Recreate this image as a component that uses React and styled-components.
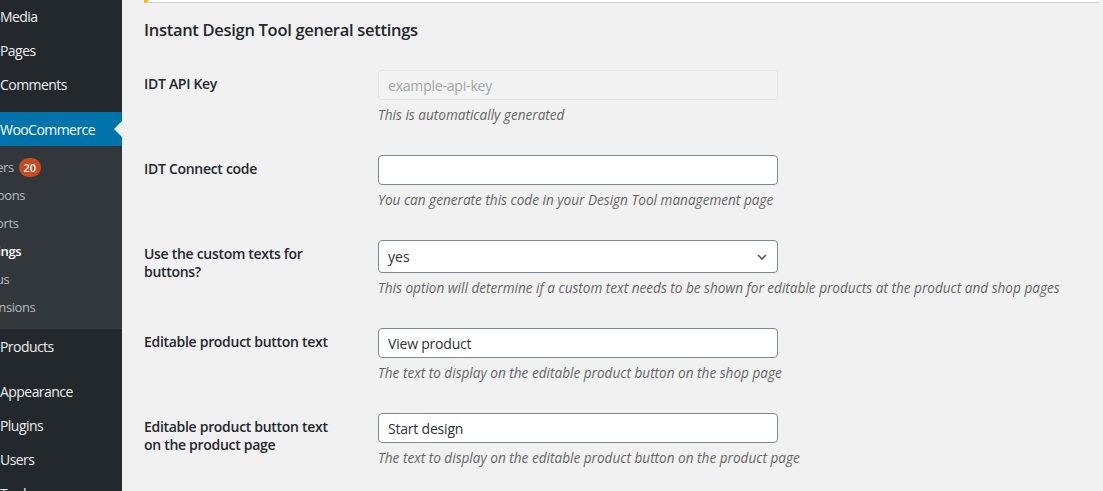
import styled, { createGlobalStyle } from "styled-components";

const GlobalStyle = createGlobalStyle`
  html, body, #root {
    margin: 0;
    height: 100%;
  }
  body {
    background: #f1f1f1;
    font-family: "Open Sans", "Noto Sans", sans-serif;
    color: #23282d;
  }
`;

const mainMenu = [
  { label: "Media" },
  { label: "Pages" },
  { label: "Comments", separator: true },
  {
    label: "WooCommerce",
    current: true,
    submenu: [
      { label: "Orders", badge: 20 },
      { label: "Coupons" },
      { label: "Reports" },
      { label: "Settings", current: true },
      { label: "Status" },
      { label: "Extensions" },
    ],
  },
  { label: "Products", separator: true },
  { label: "Appearance" },
  { label: "Plugins" },
  { label: "Users" },
  { label: "Tools" },
];

const fields = [
  {
    label: "IDT API Key",
    type: "text",
    value: "example-api-key",
    disabled: true,
    description: "This is automatically generated",
  },
  {
    label: "IDT Connect code",
    type: "text",
    value: "",
    description: "You can generate this code in your Design Tool management page",
  },
  {
    label: "Use the custom texts for buttons?",
    type: "select",
    value: "yes",
    description:
      "This option will determine if a custom text needs to be shown for editable products at the product and shop pages",
  },
  {
    label: "Editable product button text",
    type: "text",
    value: "View product",
    description: "The text to display on the editable product button on the shop page",
  },
  {
    label: "Editable product button text on the product page",
    type: "text",
    value: "Start design",
    description: "The text to display on the editable product button on the product page",
  },
];

const Layout = styled.div`
  display: flex;
  height: 100vh;
  overflow: hidden;
`;

const Sidebar = styled.nav`
  width: 122px;
  flex-shrink: 0;
  background: #23282d;
  overflow: hidden;
`;

// the screenshot crops the left part of the admin menu (icons)
const Menu = styled.ul`
  list-style: none;
  margin: -1px 0 0 -36px;
  padding: 0;
  width: 158px;
`;

const MenuItem = styled.li`
  margin-bottom: ${(p) => (p.$separator ? "11px" : "0")};
`;

const MenuLink = styled.div`
  position: relative;
  height: 34px;
  display: flex;
  align-items: center;
  padding-left: 36px;
  font-size: 14px;
  letter-spacing: -0.55px;
  color: ${(p) => (p.$current ? "#fff" : "#eee")};
  background: ${(p) => (p.$current ? "#0073aa" : "transparent")};
  white-space: nowrap;

  ${(p) =>
    p.$current &&
    `
    &:after {
      content: "";
      position: absolute;
      right: 0;
      top: 50%;
      margin-top: -8px;
      border: 8px solid transparent;
      border-right-color: #f1f1f1;
    }
  `}
`;

const Submenu = styled.ul`
  list-style: none;
  margin: 0;
  padding: 7px 0 8px;
  background: #32373c;
`;

const SubItem = styled.li`
  height: 28px;
  display: flex;
  align-items: center;
  gap: 5px;
  padding-left: 10px;
  font-size: 13px;
  letter-spacing: -0.4px;
  white-space: nowrap;
  color: ${(p) => (p.$current ? "#fff" : "rgba(240, 245, 250, 0.7)")};
  font-weight: ${(p) => (p.$current ? 600 : 400)};
`;

const Badge = styled.span`
  display: inline-flex;
  align-items: center;
  justify-content: center;
  min-width: 20px;
  height: 19px;
  padding: 0 1px;
  border-radius: 10px;
  background: #ca4a1f;
  color: #fff;
  font-size: 11px;
  font-weight: 600;
  letter-spacing: 0;
`;

const Content = styled.main`
  flex: 1;
  padding: 0 4px 0 22px;
`;

const Notice = styled.div`
  height: 2px;
  background: #fff;
  border-left: 4px solid #ffb900;
  border-bottom: 1px solid #ccd0d4;
`;

const Title = styled.h2`
  margin: 15px 0 13px;
  font-size: 16.5px;
  line-height: 24px;
  font-weight: 600;
  letter-spacing: -0.3px;
  color: #23282d;
`;

const Row = styled.div`
  display: grid;
  grid-template-columns: 234px 1fr;
`;

const Label = styled.div`
  padding: 20px 0;
  max-width: 200px;
  font-size: 14px;
  line-height: 18px;
  font-weight: 600;
  letter-spacing: -0.3px;
  color: #23282d;
`;

const Field = styled.div`
  padding: 15px 0;
`;

const TextInput = styled.input`
  box-sizing: border-box;
  display: block;
  width: 400px;
  height: 30px;
  margin: 0;
  padding: 0 9px;
  border: 1px solid ${(p) => (p.disabled ? "#e2e4e7" : "#7e8993")};
  border-radius: 4px;
  background: ${(p) => (p.disabled ? "#f3f3f3" : "#fff")};
  color: ${(p) => (p.disabled ? "#a0a5aa" : "#2c3338")};
  font-family: inherit;
  font-size: 14px;
  letter-spacing: -0.2px;
  outline: none;
`;

const SelectBox = styled.div`
  box-sizing: border-box;
  width: 400px;
  height: 33px;
  display: flex;
  align-items: center;
  justify-content: space-between;
  padding: 0 10px 0 9px;
  border: 1px solid #7e8993;
  border-radius: 4px;
  background: #fff;
  color: #2c3338;
  font-size: 14px;
`;

const Description = styled.p`
  margin: 4px 0 0;
  font-size: 13.6px;
  line-height: 21px;
  font-style: italic;
  color: #666;
  white-space: nowrap;
`;

const Chevron = () => (
  <svg width="10" height="6" viewBox="0 0 10 6" fill="none">
    <path d="M1 1l4 4 4-4" stroke="#555d66" strokeWidth="1.6" />
  </svg>
);

const SettingRow = ({ field }) => (
  <Row>
    <Label>{field.label}</Label>
    <Field>
      {field.type === "select" ? (
        <SelectBox>
          <span>{field.value}</span>
          <Chevron />
        </SelectBox>
      ) : (
        <TextInput defaultValue={field.value} disabled={field.disabled} />
      )}
      <Description>{field.description}</Description>
    </Field>
  </Row>
);

export default function App() {
  return (
    <>
      <GlobalStyle />
      <Layout>
        <Sidebar>
          <Menu>
            {mainMenu.map((item) => (
              <MenuItem key={item.label} $separator={item.separator}>
                <MenuLink $current={item.current}>{item.label}</MenuLink>
                {item.submenu && (
                  <Submenu>
                    {item.submenu.map((sub) => (
                      <SubItem key={sub.label} $current={sub.current}>
                        {sub.label}
                        {sub.badge && <Badge>{sub.badge}</Badge>}
                      </SubItem>
                    ))}
                  </Submenu>
                )}
              </MenuItem>
            ))}
          </Menu>
        </Sidebar>
        <Content>
          <Notice />
          <Title>Instant Design Tool general settings</Title>
          {fields.map((field) => (
            <SettingRow key={field.label} field={field} />
          ))}
        </Content>
      </Layout>
    </>
  );
}
